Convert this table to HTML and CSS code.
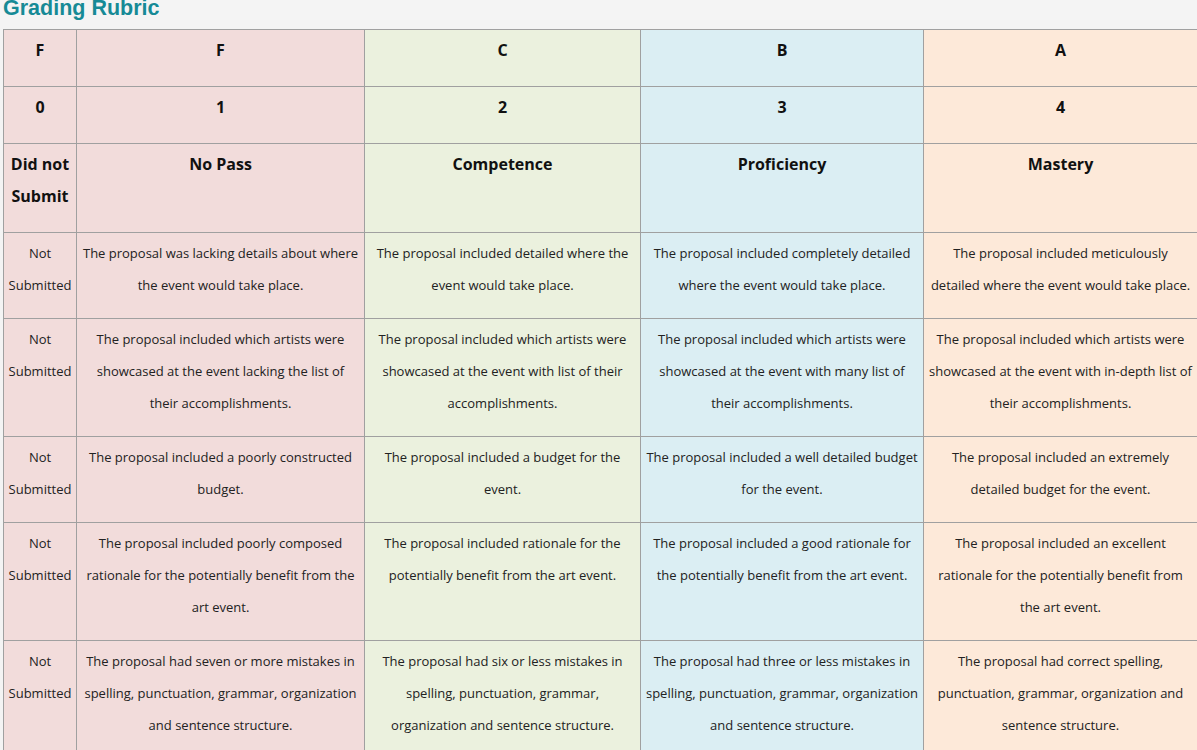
FILE: index.html
```html
<!DOCTYPE html>
<html>
<head>
<meta charset="utf-8">
<link rel="stylesheet" href="styles.css">
</head>
<body>
<h2 class="title">Grading Rubric</h2>
<table class="rubric">
  <colgroup>
    <col class="c0"><col class="c1"><col class="c2"><col class="c3"><col class="c4">
  </colgroup>
  <tr class="head">
    <th class="f">F</th><th class="f">F</th><th class="c">C</th><th class="b">B</th><th class="a">A</th>
  </tr>
  <tr class="head">
    <th class="f">0</th><th class="f">1</th><th class="c">2</th><th class="b">3</th><th class="a">4</th>
  </tr>
  <tr class="head names">
    <th class="f">Did not Submit</th><th class="f">No Pass</th><th class="c">Competence</th><th class="b">Proficiency</th><th class="a">Mastery</th>
  </tr>
  <tr>
    <td class="f">Not Submitted</td>
    <td class="f">The proposal was lacking details about where the event would take place.</td>
    <td class="c">The proposal included detailed where the event would take place.</td>
    <td class="b">The proposal included completely detailed where the event would take place.</td>
    <td class="a">The proposal included meticulously detailed where the event would take place.</td>
  </tr>
  <tr>
    <td class="f">Not Submitted</td>
    <td class="f">The proposal included which artists were showcased at the event lacking the list of their accomplishments.</td>
    <td class="c">The proposal included which artists were showcased at the event with list of their accomplishments.</td>
    <td class="b">The proposal included which artists were showcased at the event with many list of their accomplishments.</td>
    <td class="a">The proposal included which artists were showcased at the event with in-depth list of their accomplishments.</td>
  </tr>
  <tr>
    <td class="f">Not Submitted</td>
    <td class="f">The proposal included a poorly constructed budget.</td>
    <td class="c">The proposal included a budget for the event.</td>
    <td class="b">The proposal included a well detailed budget for the event.</td>
    <td class="a">The proposal included an extremely detailed budget for the event.</td>
  </tr>
  <tr>
    <td class="f">Not Submitted</td>
    <td class="f">The proposal included poorly composed rationale for the potentially benefit from the art event.</td>
    <td class="c">The proposal included rationale for the potentially benefit from the art event.</td>
    <td class="b">The proposal included a good rationale for the potentially benefit from the art event.</td>
    <td class="a">The proposal included an excellent rationale for the potentially benefit from the art event.</td>
  </tr>
  <tr>
    <td class="f">Not Submitted</td>
    <td class="f">The proposal had seven or more mistakes in spelling, punctuation, grammar, organization and sentence structure.</td>
    <td class="c">The proposal had six or less mistakes in spelling, punctuation, grammar, organization and sentence structure.</td>
    <td class="b">The proposal had three or less mistakes in spelling, punctuation, grammar, organization and sentence structure.</td>
    <td class="a">The proposal had correct spelling, punctuation, grammar, organization and sentence structure.</td>
  </tr>
</table>
</body>
</html>
```
FILE: styles.css
```css
html, body {
  margin: 0;
  padding: 0;
  background: #f4f4f4;
  overflow: hidden;
}
body {
  padding: 0 3px;
  font-family: "Open Sans", "Liberation Sans", sans-serif;
  color: #1a1a1a;
}
.title {
  font-family: "Liberation Sans", Arial, sans-serif;
  font-size: 21.5px;
  font-weight: bold;
  color: #168a96;
  line-height: 24px;
  margin: -4px 0 9px 0;
}
.rubric {
  border-collapse: collapse;
  table-layout: fixed;
  width: 1194px;
}
.c0 { width: 73px; }
.c1 { width: 288px; }
.c2 { width: 276px; }
.c3 { width: 283px; }
.c4 { width: 274px; }
.rubric th, .rubric td {
  border: 1px solid #a0a0a0;
  text-align: center;
  vertical-align: top;
  line-height: 32px;
}
.rubric th {
  font-size: 16px;
  font-weight: bold;
  padding: 4px 4px 20px;
  color: #111;
}
.rubric td {
  font-size: 13px;
  padding: 4px 4px 17px;
  color: #222;
}
.f { background: #f2dcdb; }
.c { background: #ebf1de; }
.b { background: #dbeef3; }
.a { background: #fde9d9; }
```
